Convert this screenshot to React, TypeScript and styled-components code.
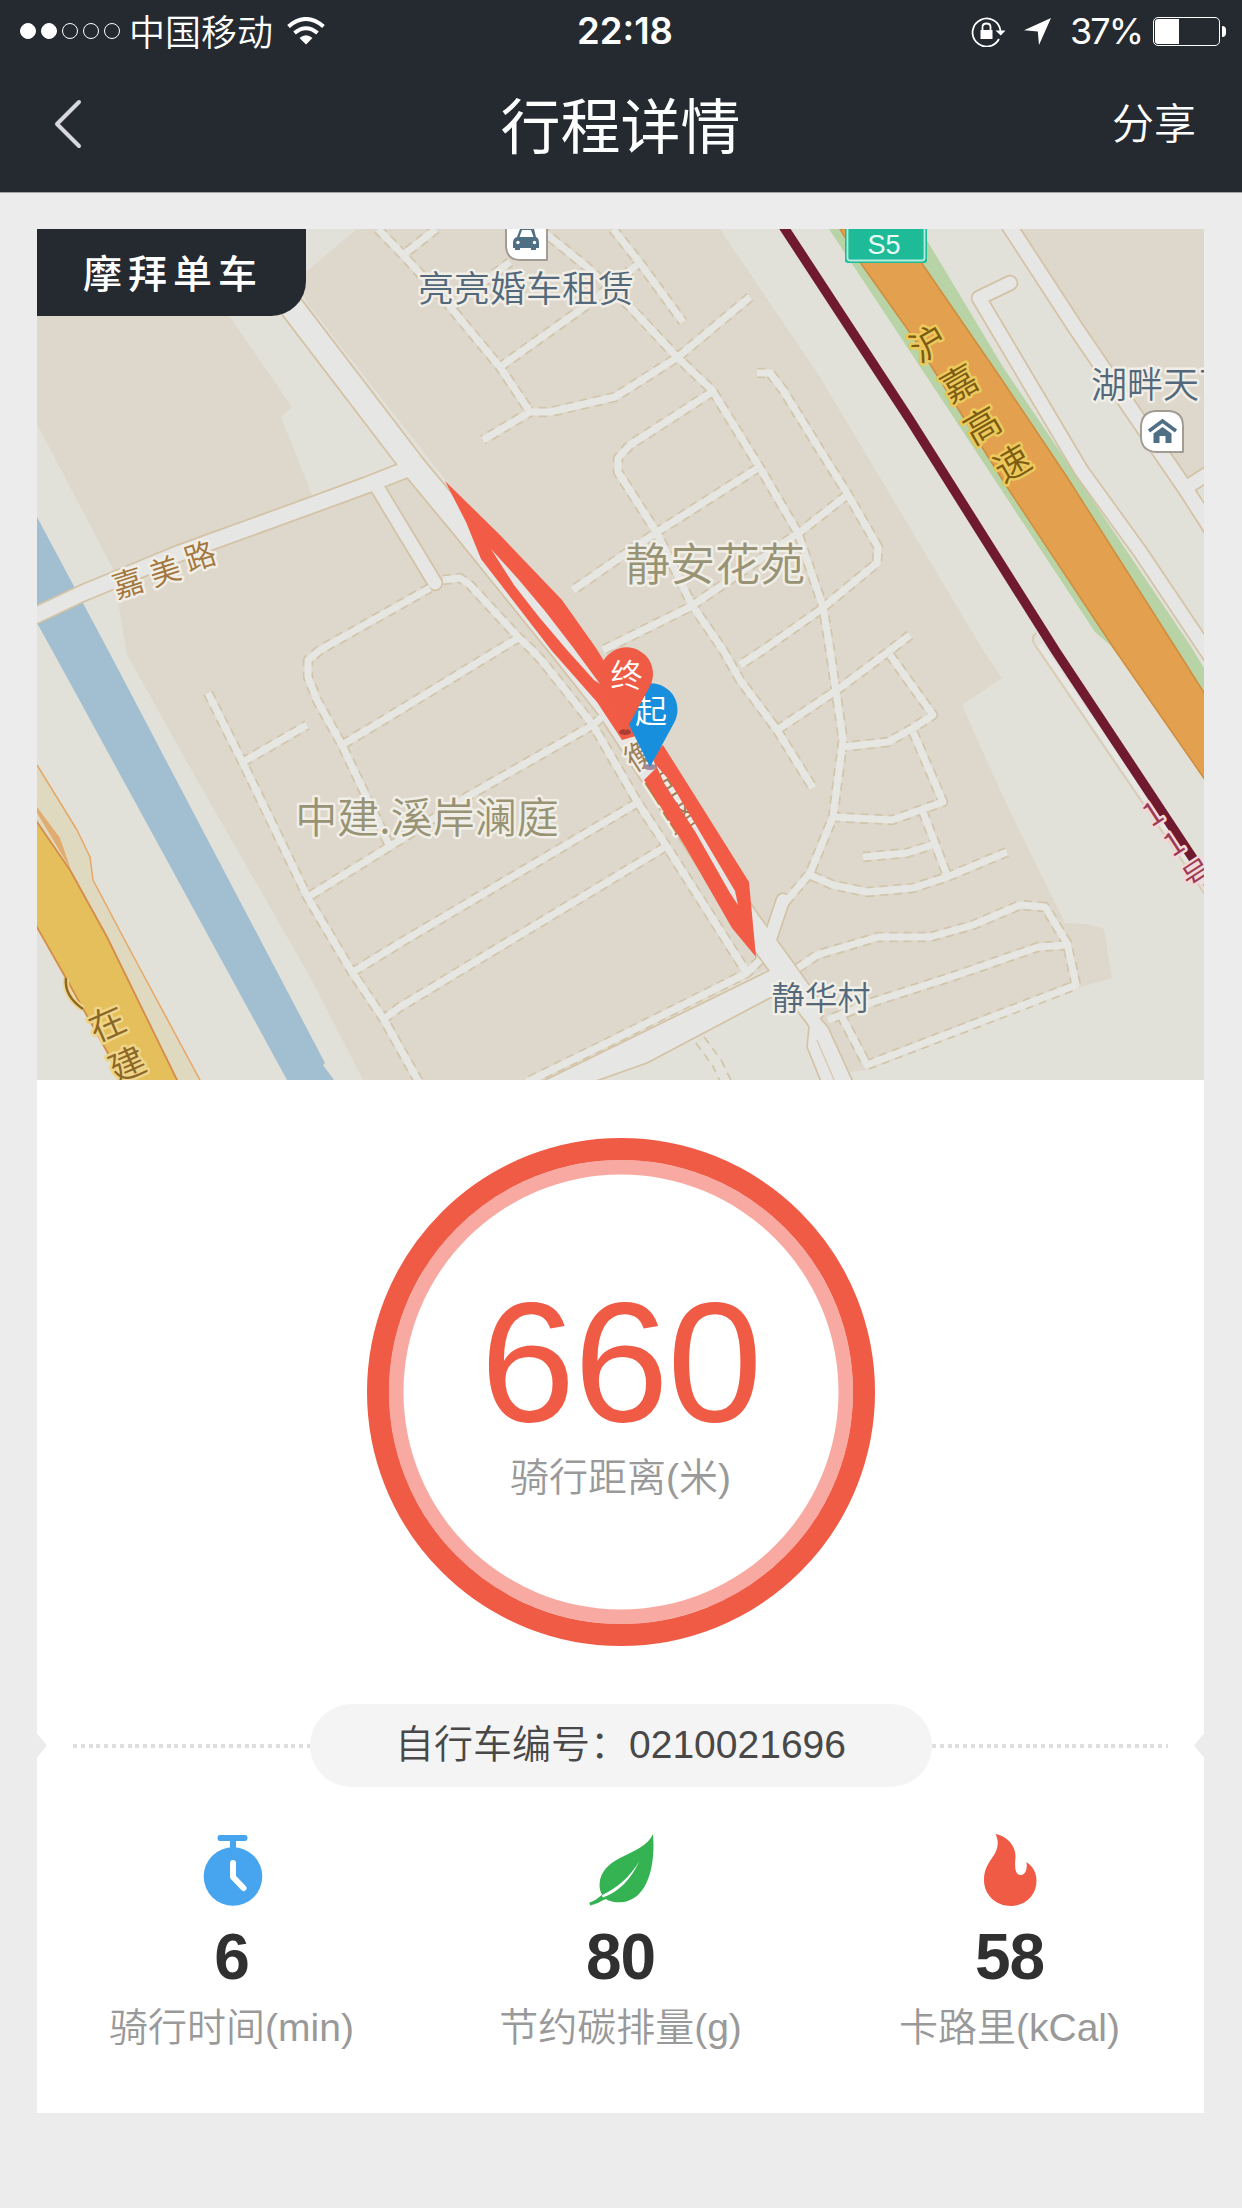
import React from "react";
import styled, { createGlobalStyle } from "styled-components";

const CJK = '"Liberation Sans", "Noto Sans CJK SC", sans-serif';
const MAP_FONT = '"Noto Sans CJK SC", sans-serif';

const GlobalStyle = createGlobalStyle`
  * { box-sizing: border-box; }
  body { margin: 0; background: #ececec; }
`;

const Screen = styled.div`
  width: 1242px;
  height: 2208px;
  background: #ececec;
  font-family: ${CJK};
  overflow: hidden;
`;

const Header = styled.header`
  height: 193px;
  background: #252930;
  border-bottom: 1px solid #a3a3a5;
  color: #fdfefe;
`;

const StatusBar = styled.div`
  display: grid;
  grid-template-columns: 555px 100px 1fr;
  align-items: center;
  height: 61px;
  padding: 0 16px 0 20px;
`;

const StatusGroup = styled.div<{ $end?: boolean }>`
  display: flex;
  align-items: center;
  justify-content: ${(p) => (p.$end ? "flex-end" : "flex-start")};
`;

const Signal = styled.div`
  display: flex;
  gap: 5px;
  margin-right: 9px;
`;

const SignalDot = styled.span<{ $on: boolean }>`
  width: 16px;
  height: 16px;
  border-radius: 50%;
  border: 1.5px solid #fff;
  background: ${(p) => (p.$on ? "#fff" : "transparent")};
`;

const Carrier = styled.span`
  font: 350 36px/60px "Noto Sans CJK SC", sans-serif;
  height: 62px;
  margin-right: 14px;
`;

const Clock = styled.div`
  font: 600 36.5px/60px Inter, sans-serif;
  text-align: center;
  white-space: nowrap;
`;

const Percent = styled.span`
  font: 400 36px/60px Inter, sans-serif;
  letter-spacing: -2px;
  margin: 0 11px 0 19px;
`;

const Battery = styled.div`
  width: 67px;
  height: 29px;
  border: 1.5px solid #fff;
  border-radius: 5px;
  padding: 1px;
`;

const BatteryLevel = styled.div`
  width: 24px;
  height: 100%;
  border-radius: 3px 0 0 3px;
  background: #fff;
`;

const BatteryCap = styled.div`
  width: 4px;
  height: 11px;
  margin-left: 2px;
  border-radius: 0 4px 4px 0;
  background: #fff;
`;

const NavBar = styled.nav`
  display: grid;
  grid-template-columns: 1fr auto 1fr;
  align-items: center;
  height: 131px;
  padding: 0 46px 6px 53px;
`;

const Title = styled.h1`
  margin: 0;
  font: 400 60px/90px "Noto Sans CJK SC", sans-serif;
  padding: 0 8px 2px 0;
`;

const Share = styled.span`
  font: 350 42px/60px "Noto Sans CJK SC", sans-serif;
  justify-self: end;
  padding-bottom: 5px;
`;

const Card = styled.main`
  width: 1167px;
  height: 1884px;
  margin: 36px 0 0 37px;
  background: #fff;
`;

const MapPanel = styled.section`
  position: relative;
  height: 851px;
  overflow: hidden;
  svg { display: block; }
`;

const Brand = styled.div`
  position: absolute;
  left: 0;
  top: 0;
  width: 269px;
  height: 87px;
  padding-left: 46px;
  border-bottom-right-radius: 35px;
  background: #252930;
  color: #fff;
  font: 500 39px/84px "Noto Sans CJK SC", sans-serif;
  letter-spacing: 6px;
`;

const Summary = styled.section`
  display: flex;
  justify-content: center;
  height: 624px;
  padding-top: 58px;
`;

const Ring = styled.div`
  display: flex;
  flex-direction: column;
  align-items: center;
  width: 508px;
  height: 508px;
  border-radius: 50%;
  border: 22px solid #f05b46;
  box-shadow: inset 0 0 0 14.5px #f8aaa2;
  padding-top: 107px;
`;

const Distance = styled.div`
  color: #f05b46;
  font-size: 171px;
  line-height: 190px;
  letter-spacing: -1.6px;
`;

const Caption = styled.div`
  color: #999;
  font-size: 39px;
  line-height: 56px;
  font-weight: 350;
  white-space: nowrap;
`;

const DistanceCaption = styled(Caption)`
  margin-top: -7px;
`;

const BikeRow = styled.section`
  display: flex;
  align-items: center;
  justify-content: space-between;
  height: 83px;
`;

const Notch = styled.i<{ $right?: boolean }>`
  width: 10px;
  height: 24px;
  background: #ececec;
  clip-path: ${(p) =>
    p.$right ? "polygon(100% 0, 0 50%, 100% 100%)" : "polygon(0 0, 100% 50%, 0 100%)"};
`;

const Dots = styled.i`
  flex: 1;
  height: 4px;
  margin-top: 1px;
  background: repeating-linear-gradient(90deg, #dedede 0 4px, transparent 4px 7.8px);
`;

const DotsLeft = styled(Dots)`
  margin-left: 26px;
`;

const DotsRight = styled(Dots)`
  margin-right: 26px;
`;

const BikePill = styled.div`
  width: 622px;
  height: 83px;
  border-radius: 42px;
  background: #f4f4f4;
  color: #484848;
  font-size: 39px;
  font-weight: 350;
  line-height: 81px;
  text-align: center;
`;

const Stats = styled.section`
  display: grid;
  grid-template-columns: repeat(3, 1fr);
  padding-top: 45px;
`;

const Stat = styled.div`
  display: flex;
  flex-direction: column;
  align-items: center;
`;

const StatIcon = styled.svg`
  width: 80px;
  height: 78px;
`;

const StatValue = styled.div`
  margin-top: 11px;
  color: #303030;
  font-size: 64px;
  font-weight: 700;
  line-height: 72px;
  letter-spacing: -1px;
`;

const StatCaption = styled(Caption)`
  margin-top: 7px;
`;

/* Narrow footpaths of the estates, in map coordinates. */
const PATHS = [
  "540,229 587,267 630,307 677,357 712,390 760,468 798,533 823,607 830,650 843,740 833,817 810,873 783,905",
  "613,229 640,263 683,322",
  "750,297 678,357 615,397 550,412 530,412 483,440",
  "378,229 403,255 447,303 500,367 530,412",
  "436,229 403,255",
  "500,367 587,305 637,265",
  "450,308 510,262",
  "712,392 630,445 618,458 618,472 657,533 692,605 723,650 740,680 777,730 813,788",
  "758,468 657,532 573,590",
  "847,495 800,532 690,607 603,650",
  "757,373 770,373 783,390 820,450 847,493 878,547 877,563 820,610 763,650 740,665",
  "910,635 888,652 837,690 777,730",
  "890,655 933,715 913,728 888,742 843,747",
  "913,732 943,802 892,820 833,817",
  "923,812 947,875",
  "863,857 907,853 932,845",
  "1007,852 947,877 913,888 867,892 833,885 810,875",
  "798,968 817,955 878,937 930,937 973,925 1020,905 1045,907 1067,943 1076,985 867,1065 842,1017",
  "1067,945 1038,947 957,975 873,1002 828,1020",
  "430,588 320,650 308,660 308,677 317,700 342,745 390,847",
  "443,580 460,578 470,585 518,637 532,650 543,662 593,725 638,803 667,847 747,973",
  "518,638 490,655 400,710 342,745",
  "593,725 470,795 400,840 308,897",
  "637,803 400,943 353,972",
  "665,847 400,1007 385,1018",
  "208,693 243,763 308,898 352,972 383,1018 420,1084",
  "243,762 307,725",
  "760,960 747,973 607,1043 527,1082",
  "593,725 603,716",
];

const ROADS: { d: string; w: number }[] = [
  { d: "377,487 435,583", w: 13 },
  { d: "30,618 83,593 180,553 263,523 367,485 410,468", w: 15 },
  { d: "783,900 768,945", w: 12 },
  { d: "1010,283 979,298 1081,470 1141,553 1210,656", w: 13 },
  { d: "1008,224 1077,330 1137,418 1185,488 1212,530", w: 14 },
  { d: "1187,487 1212,471", w: 13 },
  { d: "280,292 291,306 414,467 462,525 563,650 608,707 745,917 780,965 812,1010", w: 23 },
];

const BLOCKS = [
  "37,229 200,260 230,317 292,407 281,417 313,497 400,462 608,707 745,917 774,965 543,1080 363,1080 310,977 197,780 127,655 112,567 37,424",
  "357,229 720,229 820,377 983,650 1002,678 962,705 1007,805 1065,923 1087,924 1104,929 1112,978 1078,988 867,1070 850,1072 820,1015 447,482 307,303 296,280",
  "1020,229 1204,229 1204,468 1187,478",
];

type Label = { t: string; x: number; y: number; s: number; c: string; r?: number; halo?: string };

const ROAD_LABELS: Label[] = [
  { t: "嘉", x: 128, y: 583, s: 31, c: "#a3763d", r: -18 },
  { t: "美", x: 165, y: 571, s: 31, c: "#a3763d", r: -18 },
  { t: "路", x: 200, y: 556, s: 31, c: "#a3763d", r: -18 },
  { t: "沪", x: 928, y: 343, s: 36, c: "#7d5c12", r: -30, halo: "#ecc95c" },
  { t: "嘉", x: 959, y: 383, s: 36, c: "#7d5c12", r: -30, halo: "#ecc95c" },
  { t: "高", x: 982, y: 425, s: 36, c: "#7d5c12", r: -30, halo: "#ecc95c" },
  { t: "速", x: 1012, y: 463, s: 36, c: "#7d5c12", r: -30, halo: "#ecc95c" },
  { t: "在", x: 107, y: 1023, s: 36, c: "#8c6726", r: -24, halo: "#eed58a" },
  { t: "建", x: 127, y: 1064, s: 36, c: "#8c6726", r: -24, halo: "#eed58a" },
  { t: "1", x: 1152, y: 813, s: 32, c: "#9c3b55", r: -33, halo: "#f2d8d8" },
  { t: "1", x: 1173, y: 843, s: 32, c: "#9c3b55", r: -33, halo: "#f2d8d8" },
  { t: "号", x: 1198, y: 874, s: 31, c: "#9c3b55", r: -33, halo: "#f2d8d8" },
  { t: "衡", x: 641, y: 754, s: 32, c: "#9b7f5c", r: -33 },
  { t: "臣", x: 662, y: 788, s: 32, c: "#9b7f5c", r: -33 },
  { t: "路", x: 681, y: 817, s: 32, c: "#9b7f5c", r: -33 },
];

const PLACE_LABELS: Label[] = [
  { t: "亮亮婚车租赁", x: 526, y: 288, s: 36, c: "#53697b" },
  { t: "静安花苑", x: 715, y: 564, s: 45, c: "#979374" },
  { t: "中建.溪岸澜庭", x: 427, y: 817, s: 42, c: "#979374" },
  { t: "静华村", x: 821, y: 998, s: 33, c: "#53697b" },
  { t: "湖畔天下", x: 1163, y: 384, s: 36, c: "#53697b" },
];

const MapLabel = ({ t, x, y, s, c, r = 0, halo = "#f0eee6" }: Label) => (
  <text
    x={x}
    y={y + s * 0.375}
    fontSize={s}
    fontWeight={350}
    fill={c}
    fontFamily={MAP_FONT}
    textAnchor="middle"
    stroke={halo}
    strokeWidth={5}
    strokeLinejoin="round"
    paintOrder="stroke"
    transform={r ? `rotate(${r} ${x} ${y})` : undefined}
  >
    {t}
  </text>
);

const Pin = ({ x, y, tip, color, t }: { x: number; y: number; tip: number; color: string; t: string }) => (
  <g>
    <path
      d={`M${x - 1} ${tip} L${x - 23} ${y + 13} A26.5 26.5 0 1 1 ${x + 23} ${y + 13} Z`}
      fill={color}
    />
    <text x={x} y={y + 12.5} fontSize={32} fontWeight={350} fill="#fff" fontFamily={MAP_FONT} textAnchor="middle">
      {t}
    </text>
  </g>
);

const RouteMap = () => (
  <svg width="1167" height="851" viewBox="37 229 1167 851" fill="none" strokeLinejoin="round">
    <rect x="37" y="229" width="1167" height="851" fill="#e2e1d9" />
    {BLOCKS.map((p) => (
      <polygon key={p} points={p} fill="#ded8cc" />
    ))}
    <polygon points="37,517 108,650 325,1063 323,1065 334,1080 287,1080 52,650 37,623" fill="#a1bfd0" />

    <polygon points="37,765 77,830 90,857 93,880 130,950 200,1080 178,1080 37,822" fill="#dfd9bf" />
    <polyline points="37,765 77,830 90,857 93,880 130,950 200,1080" stroke="#e6a766" strokeWidth="1.5" />
    <polygon points="37,807 60,838 71,870 52,838 37,813" fill="#e0ac70" />
    <polygon points="30,810 37,822 70,870 107,937 178,1082 122,1082 110,1057 67,980 30,915" fill="#e5bf5b" stroke="#d58c48" strokeWidth="1.8" />

    <polygon points="829,229 913,356 977,453 1095,632 1110,645 1204,760 1204,668 1190,645 1003,367 940,262 920,229" fill="#b8d3a5" />
    <polygon points="840,229 862,265 913,337 1007,487 1115,650 1210,787 1210,702 1177,650 1067,477 1000,377 923,265 900,229" fill="#e3a14f" stroke="#cf8d3d" strokeWidth="1.5" />

    <g strokeLinecap="butt" stroke="#d1c5aa">
      {PATHS.map((p) => (
        <polyline key={p} points={p} strokeWidth="10.5" strokeDasharray="8 6" />
      ))}
      <polyline points="700,1040 717,1063 727,1084" strokeWidth="12" strokeDasharray="8 6" />
    </g>
    <polyline points="700,1040 717,1063 727,1084" stroke="#e3e2db" strokeWidth="8.5" />

    <g stroke="#d4c2a5" strokeLinecap="round">
      {ROADS.map((r) => (
        <polyline key={r.d} points={r.d} strokeWidth={r.w + 3.4} />
      ))}
    </g>
    <polygon points="780,962 770,970 580,1063 535,1085 585,1085 647,1063 770,998 800,990" fill="#e6e6e4" stroke="#d4c2a5" strokeWidth="1.7" />
    <path d="M797 978 L807 1003 L828 1027 L854 1084 H822 L807 1047 L809 1027 L785 990Z" fill="#e6e6e4" stroke="#d4c2a5" strokeWidth="1.7" />
    <g stroke="#e6e6e3">
      {PATHS.map((p) => (
        <polyline key={p} points={p} strokeWidth="7" />
      ))}
    </g>
    <g stroke="#e6e6e4" strokeLinecap="round">
      {ROADS.map((r) => (
        <polyline key={r.d} points={r.d} strokeWidth={r.w} />
      ))}
    </g>
    <polyline points="817,1040 834,1080" stroke="#d9ccb4" strokeWidth="1.5" />

    <path d="M1036 633 Q1030 638 1035 645 L1206 896" stroke="#d9ccb4" strokeWidth="2" />
    <path d="M1040 645 L1206 888" stroke="#e8e7e3" strokeWidth="5" />
    <polyline points="783,226 910,420 1055,650 1198,866" stroke="#6f1a2e" strokeWidth="9.5" strokeLinejoin="miter" />

    {ROAD_LABELS.map((l) => (
      <MapLabel key={l.t + l.y} {...l} />
    ))}
    <path d="M66 978 Q64 996 83 1009" stroke="#eed58a" strokeWidth="6" />
    <path d="M66 978 Q64 996 83 1009" stroke="#8c6726" strokeWidth="2.5" />
    {PLACE_LABELS.map((l) => (
      <MapLabel key={l.t} {...l} />
    ))}

    <path d="M845 222 H927 V260 Q927 263 924 263 H848 Q845 263 845 260Z" fill="#1dbb97" />
    <path d="M847.500 222 V258 Q847.500 260.500 850 260.500 H922 Q924.500 260.500 924.500 258 V222" stroke="#b5ecdf" strokeWidth="1.8" />
    <text x="884" y="254" fontSize="27" fill="#e9fbf6" fontFamily="Liberation Sans, sans-serif" textAnchor="middle">
      S5
    </text>

    <path d="M506 222 V247 Q507 260 520 260 H547 V222Z" fill="#fff" stroke="#a39c94" strokeWidth="2" />
    <path d="M513 243 Q513 238 517 237 L520 229 Q521 227 524 227 H529 Q533 227 534 229 L536 237 Q539 238 539 243 V248 H536 V250 H531 V248 H520 V250 H515 V248 H513Z" fill="#4f6f84" />
    <path d="M519.500 237 L522 230 H531 L533.500 237Z" fill="#fff" />
    <circle cx="518" cy="242.500" r="1.7" fill="#fff" />
    <circle cx="534.500" cy="242.500" r="1.700" fill="#fff" />

    <path d="M1155 411 H1169 Q1183 412 1183 426 V452 H1156 Q1142 451 1141 438 V426 Q1142 412 1155 411Z" fill="#fff" stroke="#a39c94" strokeWidth="2" />
    <path d="M1149 431 L1162.500 421 L1176 431" stroke="#4f6f84" strokeWidth="3.5" strokeLinejoin="miter" />
    <path d="M1153.500 433.500 L1162.500 427 L1171.500 433.500 V443 H1165.500 V436 H1159.500 V443 H1153.500Z" fill="#4f6f84" />

    <g fill="#f25c47">
      <path
        fillRule="evenodd"
        d="M445 481 L500 535 L562 600 L596 648 L627 698 L636 736 L622 740 L597 702 L552 651 L481 559 L466 522Z M491 549 L519 580 L545 611 L572 646 L600 684 L594 680 L567 650 L539 617 L514 585Z"
      />
      <path
        fillRule="evenodd"
        d="M663 745 L702 807 L749 882 L756 957 L732 928 L686 848 L644 780 L656 768 L652 755Z M656 765 L664 783 L696 833 L730 893 L738 905 L735 891 L694 822 L669 780Z"
      />
    </g>

    <ellipse cx="650" cy="767" rx="7" ry="3" fill="#a0879c" />
    <Pin x={651} y={710} tip={767} color="#188fdd" t="起" />
    <ellipse cx="625" cy="732" rx="6" ry="3" fill="#a93c33" />
    <Pin x={626.5} y={674} tip={731} color="#f05b46" t="终" />
  </svg>
);

const WifiIcon = () => (
  <svg width="38" height="28" viewBox="0 0 38 28" fill="none" stroke="#fff" strokeWidth="4">
    <path d="M1.500 9.500 Q19 -5.500 36.500 9.500" />
    <path d="M7.500 16 Q19 6.500 30.500 16" />
    <path d="M12.500 21 Q19 15.500 25.500 21 L19 27.500Z" fill="#fff" stroke="none" />
  </svg>
);

const LockIcon = () => (
  <svg width="35" height="31" viewBox="0 0 35 31" fill="none" stroke="#fff" strokeWidth="1.8">
    <path d="M28 23 A14 14 0 1 1 29.500 15" />
    <path d="M24.500 14.500 H34.500 L29.800 19.500Z" fill="#fff" stroke="none" />
    <rect x="9.500" y="14" width="12" height="9" fill="#fff" stroke="none" />
    <path d="M11.500 14.500 V11 Q11.500 7.500 15.500 7.500 Q19.500 7.500 19.500 11 V14.500" />
  </svg>
);

const ArrowSvg = styled.svg`
  margin-left: 18px;
`;

const ArrowIcon = () => (
  <ArrowSvg width="27" height="27" viewBox="0 0 27 27">
    <path d="M27 0 L15 27 L13.800 13.500 L0 12.300Z" fill="#fff" />
  </ArrowSvg>
);

const TimerIcon = () => (
  <StatIcon viewBox="0 0 80 78">
    <path d="M28 3 H53 Q55.500 3 55.500 6 Q55.500 9 53 9 H44 V18 H38 V9 H28 Q25.500 9 25.500 6 Q25.500 3 28 3Z" fill="#46a5ee" />
    <circle cx="41" cy="44.500" r="29.300" fill="#46a5ee" />
    <path d="M41 31 V45 L51.500 56" fill="none" stroke="#fff" strokeWidth="6" strokeLinecap="round" strokeLinejoin="round" />
  </StatIcon>
);

const LeafIcon = () => (
  <StatIcon viewBox="0 0 80 78">
    <path
      d="M72 2 C62 25 20 22 18.500 53 C18.500 57 19.500 60 21 62.500 C17 66.500 13 69 8.500 70.500 L9 73.500 C15 72 20 69.500 24.500 67 C34 72 47 72 57 63 C70 51 74 26 72 2Z"
      fill="#35b353"
    />
    <path d="M20.500 63.500 C36 56 49 45 58.500 29 C50 47 38 60 22 65.500Z" fill="#fff" />
  </StatIcon>
);

const FlameIcon = () => (
  <StatIcon viewBox="0 0 80 78">
    <path
      d="M25.500 2 C37 4 46 14 45.500 25 C44.500 35 45 43 50.500 43 C55.500 43 57.500 37 56.500 30 C63.500 35 66.500 41 66.500 49 C66.500 63 55.500 74 41 74 C26 74 14 63 14 48 C14 39 17 33 22 26 C28 18 29.500 10 25.500 2Z"
      fill="#f05b46"
    />
  </StatIcon>
);

const STATS = [
  { icon: <TimerIcon />, value: "6", caption: "骑行时间(min)" },
  { icon: <LeafIcon />, value: "80", caption: "节约碳排量(g)" },
  { icon: <FlameIcon />, value: "58", caption: "卡路里(kCal)" },
];

export default function App() {
  return (
    <Screen>
      <GlobalStyle />
      <Header>
        <StatusBar>
          <StatusGroup>
            <Signal>
              {[true, true, false, false, false].map((on, i) => (
                <SignalDot key={i} $on={on} />
              ))}
            </Signal>
            <Carrier>中国移动</Carrier>
            <WifiIcon />
          </StatusGroup>
          <Clock>22:18</Clock>
          <StatusGroup $end>
            <LockIcon />
            <ArrowIcon />
            <Percent>37%</Percent>
            <Battery>
              <BatteryLevel />
            </Battery>
            <BatteryCap />
          </StatusGroup>
        </StatusBar>
        <NavBar>
          <svg width="30" height="50" viewBox="0 0 30 50" fill="none">
            <path d="M26 3 L4 25 L26 47" stroke="#d6d6de" strokeWidth="4" strokeLinecap="round" strokeLinejoin="round" />
          </svg>
          <Title>行程详情</Title>
          <Share>分享</Share>
        </NavBar>
      </Header>
      <Card>
        <MapPanel>
          <RouteMap />
          <Brand>摩拜单车</Brand>
        </MapPanel>
        <Summary>
          <Ring>
            <Distance>660</Distance>
            <DistanceCaption>骑行距离(米)</DistanceCaption>
          </Ring>
        </Summary>
        <BikeRow>
          <Notch />
          <DotsLeft />
          <BikePill>自行车编号：0210021696</BikePill>
          <DotsRight />
          <Notch $right />
        </BikeRow>
        <Stats>
          {STATS.map((s) => (
            <Stat key={s.caption}>
              {s.icon}
              <StatValue>{s.value}</StatValue>
              <StatCaption>{s.caption}</StatCaption>
            </Stat>
          ))}
        </Stats>
      </Card>
    </Screen>
  );
}
